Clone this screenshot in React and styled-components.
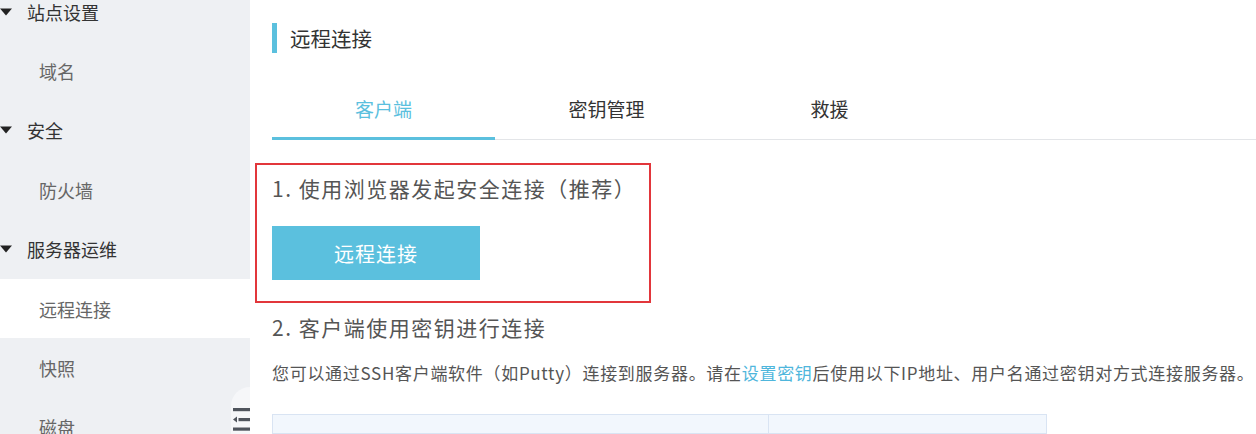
import React from "react";
import styled, { createGlobalStyle } from "styled-components";

const GlobalStyle = createGlobalStyle`
  html, body {
    margin: 0;
    padding: 0;
    background: #fff;
  }
  body {
    font-family: "Noto Sans CJK SC", "Noto Sans", sans-serif;
  }
`;

const Page = styled.div`
  display: flex;
  width: 1256px;
  height: 434px;
  overflow: hidden;
  background: #fff;
`;

const Sidebar = styled.aside`
  position: relative;
  flex: 0 0 250px;
  background: #eef0f3;
  overflow: hidden;
`;

// list is scrolled a little, the first row is cut at the top
const MenuList = styled.ul`
  list-style: none;
  margin: -18px 0 0;
  padding: 0;
`;

const MenuItem = styled.li`
  display: flex;
  align-items: center;
  gap: 15px;
  height: 59.4px;
  padding-left: ${(p) => (p.$sub ? "39px" : "0")};
  font-size: 18px;
  color: ${(p) => (p.$sub ? "#666" : "#333")};
  background: ${(p) => (p.$active ? "#fff" : "transparent")};
`;

const Caret = () => (
  <svg width="12" height="8" viewBox="0 0 12 8">
    <path d="M0 0.5 H12 L6 7.5 Z" fill="#222" />
  </svg>
);

const CollapseTab = styled.button`
  position: absolute;
  right: 0;
  bottom: 0;
  width: 19px;
  height: 47px;
  padding: 0 0 3px 2px;
  border: none;
  border-radius: 19px 0 0 0;
  background: #f6f7f9;
  display: flex;
  align-items: flex-end;
  justify-content: flex-start;
`;

const CollapseIcon = () => (
  <svg width="17" height="23" viewBox="0 0 17 23">
    <rect x="0" y="0" width="17" height="3.2" fill="#50555d" />
    <path d="M0 11.5 L4 8.5 V14.5 Z" fill="#50555d" />
    <rect x="5.5" y="10" width="11.5" height="3.2" fill="#50555d" />
    <rect x="0" y="19.5" width="17" height="3.2" fill="#50555d" />
  </svg>
);

const Main = styled.main`
  flex: 1;
  padding-left: 22px;
  display: flex;
  flex-direction: column;
  color: #555;
`;

const Title = styled.h1`
  margin: 23px 0 0;
  height: 30px;
  line-height: 30px;
  padding-left: 13px;
  border-left: 5px solid #5bc0de;
  font-size: 20.5px;
  font-weight: 400;
  color: #333;
`;

const TabBar = styled.div`
  display: flex;
  margin-top: 28px;
  border-bottom: 1px solid #e3e5e8;
`;

const Tab = styled.div`
  width: 223px;
  height: 56px;
  line-height: 56px;
  text-align: center;
  font-size: 19px;
  margin-bottom: -1px;
  color: ${(p) => (p.$active ? "#5bc0de" : "#333")};
  border-bottom: 3px solid ${(p) => (p.$active ? "#5bc0de" : "transparent")};
`;

const Highlight = styled.section`
  width: 377px;
  margin: 23px 0 0 -17px;
  padding: 8px 0 21px 15px;
  border: 2px solid #e2363b;
`;

const StepTitle = styled.h2`
  margin: ${(p) => p.$mt || "0"};
  height: 30px;
  line-height: 30px;
  font-size: 21px;
  letter-spacing: 1.5px;
  font-weight: 400;
  color: #555;
  white-space: nowrap;
`;

const ConnectButton = styled.button`
  display: block;
  margin-top: 23px;
  width: 208px;
  height: 54px;
  border: none;
  background: #5bc0de;
  color: #fff;
  font-family: inherit;
  font-size: 20px;
  letter-spacing: 1px;
`;

const Paragraph = styled.p`
  margin: 18px 0 0;
  line-height: 26px;
  font-size: 17px;
  letter-spacing: 0.7px;
  color: #555;
  white-space: nowrap;
`;

const Link = styled.a`
  color: #4fb6dc;
  text-decoration: none;
`;

const InfoTable = styled.div`
  display: grid;
  grid-template-columns: 496px 277px;
  margin-top: 28px;
  width: 773px;
  height: 50px;
  border: 1px solid #d9e4f3;
  background: #f2f7fd;
`;

const Cell = styled.div`
  border-right: ${(p) => (p.$last ? "none" : "1px solid #d9e4f3")};
`;

const menu = [
  { label: "站点设置" },
  { label: "域名", sub: true },
  { label: "安全" },
  { label: "防火墙", sub: true },
  { label: "服务器运维" },
  { label: "远程连接", sub: true, active: true },
  { label: "快照", sub: true },
  { label: "磁盘", sub: true },
];

export default function App() {
  return (
    <>
      <GlobalStyle />
      <Page>
        <Sidebar>
          <MenuList>
            {menu.map((m) => (
              <MenuItem key={m.label} $sub={m.sub} $active={m.active}>
                {!m.sub && <Caret />}
                {m.label}
              </MenuItem>
            ))}
          </MenuList>
          <CollapseTab aria-label="收起">
            <CollapseIcon />
          </CollapseTab>
        </Sidebar>

        <Main>
          <Title>远程连接</Title>
          <TabBar>
            <Tab $active>客户端</Tab>
            <Tab>密钥管理</Tab>
            <Tab>救援</Tab>
          </TabBar>

          <Highlight>
            <StepTitle>1. 使用浏览器发起安全连接（推荐）</StepTitle>
            <ConnectButton>远程连接</ConnectButton>
          </Highlight>

          <StepTitle $mt="9px 0 0">2. 客户端使用密钥进行连接</StepTitle>
          <Paragraph>
            您可以通过SSH客户端软件（如Putty）连接到服务器。请在
            <Link href="#">设置密钥</Link>
            后使用以下IP地址、用户名通过密钥对方式连接服务器。
          </Paragraph>

          <InfoTable>
            <Cell />
            <Cell $last />
          </InfoTable>
        </Main>
      </Page>
    </>
  );
}
